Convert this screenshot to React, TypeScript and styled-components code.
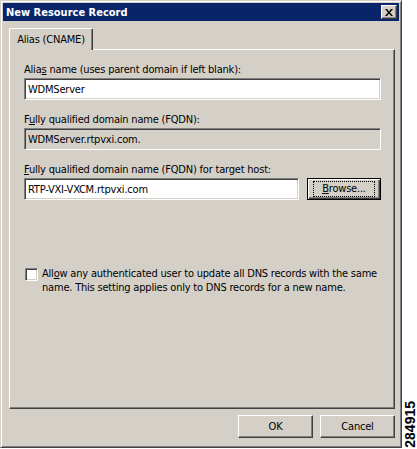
import React, { useState } from 'react';
import styled, { createGlobalStyle } from 'styled-components';

const GlobalStyle = createGlobalStyle`
  html, body {
    margin: 0;
    padding: 0;
    background: #ffffff;
  }
  body {
    font-family: "DejaVu Sans", "Liberation Sans", sans-serif;
    font-stretch: condensed;
    font-size: 11px;
    letter-spacing: -0.2px;
    color: #000;
  }
`;

const Page = styled.div`
  display: flex;
  align-items: flex-start;
  width: 417px;
  height: 449px;
`;

const Window = styled.div`
  width: 402px;
  height: 448px;
  box-sizing: border-box;
  background: #d4d0c8;
  border: 1px solid;
  border-color: #d4d0c8 #404040 #404040 #d4d0c8;
  box-shadow: inset 1px 1px #ffffff, inset -1px -1px #808080;
  padding: 2px;
  display: flex;
  flex-direction: column;
`;

const TitleBar = styled.div`
  height: 18px;
  background: #0a246a;
  display: flex;
  align-items: center;
  justify-content: space-between;
  padding: 0 2px 0 3px;
`;

const Title = styled.span`
  color: #ffffff;
  font-weight: bold;
  font-size: 11px;
  letter-spacing: 0;
`;

const CloseButton = styled.div`
  width: 16px;
  height: 14px;
  box-sizing: border-box;
  background: #d4d0c8;
  border: 1px solid;
  border-color: #ffffff #404040 #404040 #ffffff;
  box-shadow: inset -1px -1px #808080;
  display: flex;
  align-items: center;
  justify-content: center;
`;

const Body = styled.div`
  flex: 1;
  padding: 7px 4px 0 6px;
  display: flex;
  flex-direction: column;
`;

const TabStrip = styled.div`
  display: flex;
  height: 21px;
  position: relative;
  z-index: 1;
`;

const Tab = styled.div`
  width: 84px;
  box-sizing: border-box;
  height: 22px;
  background: #d4d0c8;
  border-top: 1px solid #ffffff;
  border-left: 1px solid #ffffff;
  border-right: 1px solid #404040;
  box-shadow: inset -1px 0 #808080;
  border-radius: 2px 2px 0 0;
  display: flex;
  align-items: center;
  justify-content: center;
  padding-bottom: 1px;
`;

const Panel = styled.div`
  height: 360px;
  box-sizing: border-box;
  border: 1px solid;
  border-color: #ffffff #404040 #404040 #ffffff;
  box-shadow: inset -1px -1px #808080;
  padding: 13px 13px 0 14px;
  display: flex;
  flex-direction: column;
`;

const Label = styled.label`
  display: block;
  line-height: 13px;
  height: 13px;
  white-space: nowrap;
`;

// underlined access-key letter
const Key = styled.span`
  text-decoration: underline;
`;

const Field = styled.div`
  display: flex;
  flex-direction: column;
  gap: 2px;
  margin-bottom: 13px;
`;

const InputRow = styled.div`
  display: flex;
  align-items: flex-start;
  gap: 8px;
`;

const TextBox = styled.input<{ $width: number }>`
  width: ${(p) => p.$width}px;
  height: 22px;
  box-sizing: border-box;
  margin: 0;
  border: 1px solid;
  border-color: #808080 #ffffff #ffffff #808080;
  box-shadow: inset 1px 1px #404040, inset -1px -1px #d4d0c8;
  background: #ffffff;
  padding: 0 3px;
  font: inherit;
  letter-spacing: inherit;
  color: #000;
  outline: none;
  &:read-only {
    background: #d4d0c8;
  }
`;

const Button = styled.button<{ $focused?: boolean }>`
  width: ${(p) => (p.$focused ? 74 : 75)}px;
  height: ${(p) => (p.$focused ? 22 : 23)}px;
  box-sizing: border-box;
  margin: 0;
  padding: 0;
  font: inherit;
  letter-spacing: inherit;
  color: #000;
  background: #d4d0c8;
  border: 1px solid;
  border-color: ${(p) => (p.$focused ? '#000' : '#ffffff #404040 #404040 #ffffff')};
  box-shadow: ${(p) =>
    p.$focused
      ? 'inset 1px 1px #ffffff, inset -1px -1px #404040, inset -2px -2px #808080'
      : 'inset -1px -1px #808080'};
  display: flex;
  align-items: center;
  justify-content: center;
`;

const FocusRect = styled.span`
  border: 1px dotted #000;
  padding: 1px 8px;
  line-height: 12px;
`;

const CheckRow = styled.div`
  display: flex;
  align-items: flex-start;
  gap: 4px;
  margin-top: 54px;
  padding-left: 1px;
`;

const CheckBox = styled.input`
  appearance: none;
  flex: none;
  width: 13px;
  height: 13px;
  margin: 1px 0 0 0;
  box-sizing: border-box;
  border: 1px solid;
  border-color: #808080 #ffffff #ffffff #808080;
  box-shadow: inset 1px 1px #404040, inset -1px -1px #d4d0c8;
  background: #ffffff;
`;

const CheckText = styled.label`
  line-height: 14px;
  width: 345px;
  white-space: nowrap;
`;

const Footer = styled.div`
  display: flex;
  justify-content: flex-end;
  gap: 7px;
  margin-top: 6px;
`;

const Side = styled.div`
  width: 15px;
  height: 449px;
  display: flex;
  align-items: flex-end;
  justify-content: center;
`;

const FigureNumber = styled.span`
  writing-mode: vertical-rl;
  transform: rotate(180deg);
  font-family: "Liberation Sans Narrow", "Liberation Sans", sans-serif;
  font-stretch: normal;
  font-weight: bold;
  font-size: 14px;
  line-height: 14px;
  letter-spacing: 0;
  margin-bottom: 1px;
`;

function App() {
  const [allow, setAllow] = useState(false);
  const [alias, setAlias] = useState('WDMServer');
  const [target, setTarget] = useState('RTP-VXI-VXCM.rtpvxi.com');

  return (
    <>
      <GlobalStyle />
      <Page>
        <Window>
          <TitleBar>
            <Title>New Resource Record</Title>
            <CloseButton>
              <svg width="8" height="7" viewBox="0 0 8 7">
                <path d="M0 0h2l2 2.5L6 0h2L5 3.5 8 7H6L4 4.5 2 7H0l3-3.5z" fill="#000" />
              </svg>
            </CloseButton>
          </TitleBar>
          <Body>
            <TabStrip>
              <Tab>Alias (CNAME)</Tab>
            </TabStrip>
            <Panel>
              <Field>
                <Label htmlFor="alias">
                  Alia<Key>s</Key> name (uses parent domain if left blank):
                </Label>
                <TextBox id="alias" $width={357} value={alias} onChange={(e) => setAlias(e.target.value)} />
              </Field>
              <Field>
                <Label htmlFor="fqdn">
                  F<Key>u</Key>lly qualified domain name (FQDN):
                </Label>
                <TextBox id="fqdn" $width={357} value={alias + '.rtpvxi.com.'} readOnly />
              </Field>
              <Field>
                <Label htmlFor="target">
                  <Key>F</Key>ully qualified domain name (FQDN) for target host:
                </Label>
                <InputRow>
                  <TextBox id="target" $width={275} value={target} onChange={(e) => setTarget(e.target.value)} />
                  <Button $focused>
                    <FocusRect>
                      <Key>B</Key>rowse...
                    </FocusRect>
                  </Button>
                </InputRow>
              </Field>
              <CheckRow>
                <CheckBox type="checkbox" id="allow" checked={allow} onChange={(e) => setAllow(e.target.checked)} />
                <CheckText htmlFor="allow">
                  All<Key>o</Key>w any authenticated user to update all DNS records with the same
                  <br />
                  name. This setting applies only to DNS records for a new name.
                </CheckText>
              </CheckRow>
            </Panel>
            <Footer>
              <Button>OK</Button>
              <Button>Cancel</Button>
            </Footer>
          </Body>
        </Window>
        <Side>
          <FigureNumber>284915</FigureNumber>
        </Side>
      </Page>
    </>
  );
}

export default App;
